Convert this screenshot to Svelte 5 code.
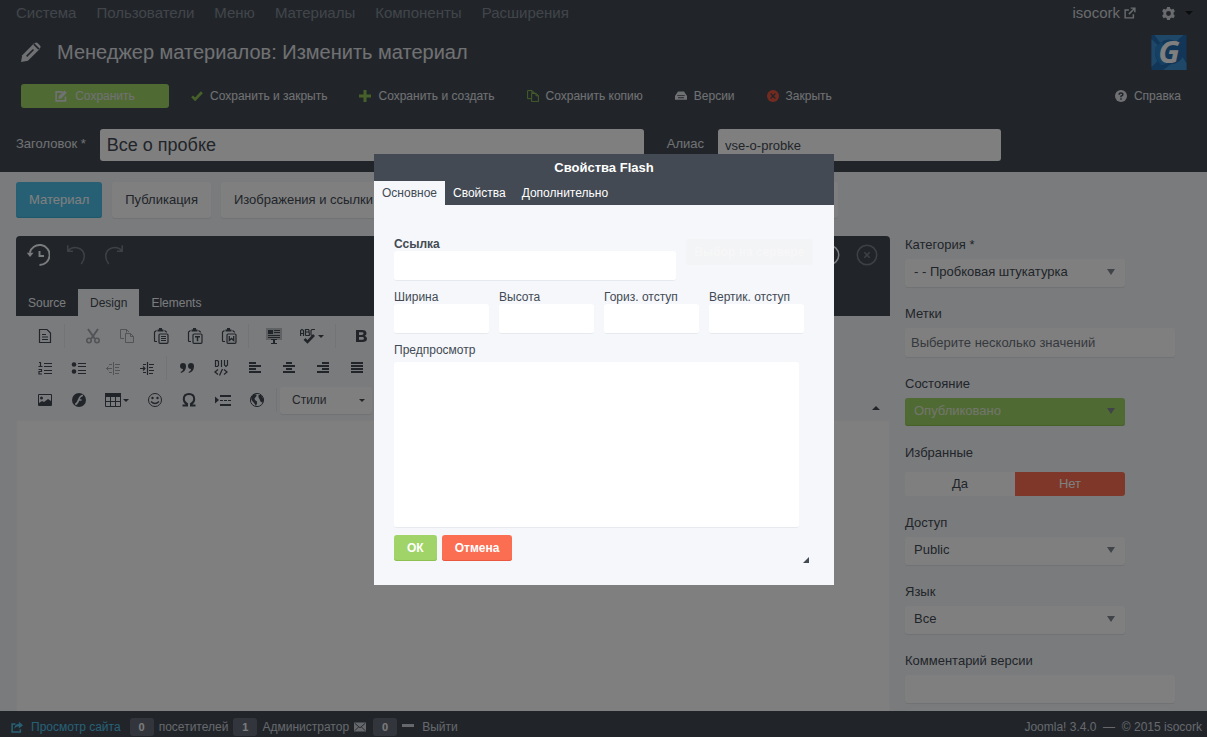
<script>
  const menu = ['Система', 'Пользователи', 'Меню', 'Материалы', 'Компоненты', 'Расширения'];

  const actions = [
    { icon: 'check', text: 'Сохранить и закрыть', tone: 'green' },
    { icon: 'plus', text: 'Сохранить и создать', tone: 'green' },
    { icon: 'copies', text: 'Сохранить копию', tone: 'green' },
    { icon: 'drive', text: 'Версии', tone: 'plain' },
    { icon: 'cancel', text: 'Закрыть', tone: 'red' }
  ];

  const rows = [
    ['page', '|wide', '-cut', '-copy', 'paste', 'pasteText', 'pasteWord', '|mid', 'selectAll', 'spell+', '|mid', 'bold'],
    ['numbers', 'bullets', '-outdent', 'indent', '|', 'quote', 'div', 'left', 'center', 'right', 'justify'],
    ['image', 'flash', 'table+', 'smile', 'omega', 'break', 'globe', '|']
  ];

  const titles = {
    page: 'Новая страница', cut: 'Вырезать', copy: 'Копировать', paste: 'Вставить', pasteText: 'Вставить текст',
    pasteWord: 'Вставить из Word', selectAll: 'Выделить всё', spell: 'Орфография', bold: 'Полужирный',
    numbers: 'Нумерованный список', bullets: 'Маркированный список', outdent: 'Уменьшить отступ',
    indent: 'Увеличить отступ', quote: 'Цитата', div: 'Контейнер', left: 'По левому краю', center: 'По центру',
    right: 'По правому краю', justify: 'По ширине', image: 'Изображение', flash: 'Flash', table: 'Таблица',
    smile: 'Смайлы', omega: 'Символ', break: 'Разрыв страницы', globe: 'IFrame'
  };

  const sizes = ['Ширина', 'Высота', 'Гориз. отступ', 'Вертик. отступ'];

  const s = 'fill="none" stroke="currentColor"';
  const board = `<path ${s} stroke-width="1.200" d="M4 13.500H2.500Q1.500 13.500 1.500 12.500V4L3.500 2.500M11.500 2.500l2 1.500v.500"/><path ${s} stroke-width="2" d="M4.500 2.500h6M6 1h3"/><rect ${s} stroke-width="1.200" x="6" y="6" width="9" height="9.300" rx="1"/>`;

  const icons = {
    pencil: `<path d="M0 16l1-5.500L10.500 1l4.500 4.500L5.500 15z"/><path d="M11.200.8a1.500 1.500 0 0 1 2 0l2 2a1.500 1.500 0 0 1 0 2l-.5.500L10.700 1.300z"/><path fill="none" stroke="#434a54" stroke-width="1.300" d="M4.500 11.500L10 6M10.300 1.700l4 4"/>`,
    edit: `<path ${s} stroke-width="2.200" d="M14 8.500v6H1.500v-12H10"/><path d="M4.500 12l.6-4L12.500.5 15.700 3.700 8.500 11.300z"/>`,
    check: `<path ${s} stroke-width="3.600" d="M1.500 8.500l4 4L14.500 3"/>`,
    plus: `<path d="M6 0h4v6h6v4h-6v6H6v-6H0V6h6z"/>`,
    copies: `<path ${s} stroke-width="1.300" d="M6 11.500H.8V.8h6l2.700 2.700v1.300M6.500.8v3h3"/><path ${s} stroke-width="1.300" d="M6.200 4.500h6l3 3v8h-9zM12 4.500v3.200h3.200"/>`,
    drive: `<path fill-rule="evenodd" d="M4 2h8l4 6v5H0V8zM3 7.500h10v-1H3zM4 9.500V11h8V9.500z"/>`,
    cancel: `<circle cx="8" cy="8" r="8"/><path fill="none" stroke="#434a54" stroke-width="1.800" d="M4.800 4.800l6.400 6.400M11.200 4.800l-6.400 6.400"/>`,
    help: `<circle cx="8" cy="8" r="8"/><path fill="none" stroke="#434a54" stroke-width="2" d="M5.500 6.200Q5.500 4 8 4t2.500 2Q10.500 7.500 8 8.200v1.500M8 11v2"/>`,
    external: `<path ${s} stroke-width="1.900" d="M6.500 4H1.500v10.500h11V9.500M9 1.500h5.500V7M14 2L6.500 9.500"/>`,
    gear: `<path fill-rule="evenodd" d="M6.300 0h3.400l.6 2.300 1.500.8 2.300-.8 1.700 3L14.200 7v2l1.600 1.700-1.700 3-2.300-.8-1.500.8-.6 2.300H6.300l-.6-2.300-1.500-.8-2.300.8-1.700-3L1.800 9V7L.2 5.300l1.700-3 2.300.8 1.500-.8zM8 5a3 3 0 1 0 0 6 3 3 0 0 0 0-6z"/>`,
    share: `<path ${s} stroke-width="2" d="M6 4H1.500v10.500h11V11"/><path d="M4.500 10.500C4.500 6 7 4 10.500 4V1L16 5.500 10.500 10V7C8 7 6 8 4.500 10.500z"/>`,
    mail: `<path d="M0 2h16v12H0z"/><path fill="none" stroke="#434a54" stroke-width="1.200" d="M1 3l7 6 7-6M1 13l5-5M15 13l-5-5"/>`,
    dash: `<path d="M0 4h16v4H0z"/>`,
    page: `<path ${s} stroke-width="1.200" d="M2.500 1.500h7.500l3.500 3.500v9.500h-11z"/><path ${s} stroke-width="1.200" d="M5 6.500h4M5 9h6M5 11.500h6"/>`,
    cut: `<path ${s} stroke-width="2" d="M3 1l7 10M13 1L6 11"/><circle ${s} stroke-width="1.600" cx="4" cy="12.500" r="2.200"/><circle ${s} stroke-width="1.600" cx="12" cy="12.500" r="2.200"/>`,
    copy: `<path ${s} d="M5 10.500H1.500v-9h6L10 4M6.500 5.500h5l3 3v6h-8zM11.500 5.500v3h3M7.500 1.500v3"/>`,
    paste: board + `<path ${s} d="M8 8.500h5M8 10.500h5M8 12.500h5"/>`,
    pasteText: board + `<path ${s} stroke-width="1.500" d="M8 8.700h5M10.500 8.500v4.800"/>`,
    pasteWord: board + `<path ${s} stroke-width="1.300" d="M8.300 8v4.500l2.200-2 2.200 2V8"/>`,
    selectAll: `<path opacity=".3" d="M0 0h16v12H0z"/><path d="M2 2h5v4H2zM8 2h6v1H8zM8 4h6v1H8zM2 7h12v1H2zM2 9h12v1H2zM7 11h2v4H7zM5 11h2v1H5zM9 11h2v1H9zM5 15h6v1H5z"/>`,
    spell: `<path ${s} stroke-width="1.200" d="M.600 8V2.500L2 1.500l1.500 1V8M.600 5.500h3M5.500 7.500v-6H8.500l.5 1v1.500H6H8.500l.8 1v2.500H5.500M15 1.500h-3l-1 1v4.500l1 .5"/><path ${s} stroke-width="2.600" d="M4.500 11l3 3 6.500-7"/>`,
    bold: `<path fill-rule="evenodd" d="M3 2h6c3 0 4.500 1.200 4.500 3.300 0 1.300-.8 2.200-2 2.600 1.500.3 2.500 1.300 2.500 2.800C14 13 12.300 14 9.500 14H3zM6 4.300v2.600h2.500c1.300 0 2-.4 2-1.300s-.7-1.300-2-1.300zM6 9v2.800h2.800c1.400 0 2.100-.5 2.100-1.400S10.200 9 8.800 9z"/>`,
    numbers: `<path ${s} stroke-width="1.200" d="M3.500 7V2.500H2M1.500 6.500h4M1.500 9.500h3v2h-2.500v2.500H5M7 3.500h8M7 6.500h8M7 10.500h8M7 13.500h8"/>`,
    bullets: `<circle cx="3" cy="4.500" r="2.300"/><circle cx="3" cy="11.500" r="2.300"/><path ${s} stroke-width="1.200" d="M7 3.500h8M7 6.500h8M7 10.500h8M7 13.500h8"/>`,
    outdent: `<path ${s} d="M8.500 2v13M10 4.500h5M10 7.500h4M10 10.500h5M10 13.500h4M1 8.500h6M3.500 6.500l-2 2 2 2M4 4.500h3M4 12.500h3"/>`,
    indent: `<path ${s} stroke-width="1.200" d="M8.500 2v13M10 4.500h5M10 7.500h4M10 10.500h5M10 13.500h4M1 8.500h5M4 6.500l2 2-2 2M4 4.500h3M4 12.500h3"/>`,
    quote: `<path d="M4 3a3 3 0 0 1 3 3c0 4-2 6-5 7l-.5-1C3 11.200 4 10.300 4 9a3 3 0 0 1 0-6zM12 3a3 3 0 0 1 3 3c0 4-2 6-5 7l-.5-1c1.500-.8 2.500-1.700 2.500-3a3 3 0 0 1 0-6z"/>`,
    div: `<path ${s} stroke-width="1.200" d="M2.500.500h2l1 1v4l-1 1h-2zM8.500 0v7M11.500 0v5l1.500 1.500L14.500 5V0"/><path ${s} stroke-width="1.300" d="M5 9.500l-3 2.500 3 2.500M11 9.500l3 2.500-3 2.500M9.500 9l-3 6.500"/>`,
    left: `<path d="M2 2h7v2H2zM2 5h12v2H2zM2 8h7v2H2zM2 11h12v2H2z"/>`,
    center: `<path d="M5 2h6v2H5zM2 5h12v2H2zM5 8h6v2H5zM2 11h12v2H2z"/>`,
    right: `<path d="M7 2h7v2H7zM2 5h12v2H2zM7 8h7v2H7zM2 11h12v2H2z"/>`,
    justify: `<path d="M2 2h12v2H2zM2 5h12v2H2zM2 8h12v2H2zM2 11h12v2H2z"/>`,
    image: `<path ${s} d="M1.500 2.500h13v11h-13z"/><circle cx="4.500" cy="6" r="1.500"/><path d="M2 13v-2l3-2 2 1 4-3 3 2v4z"/>`,
    flash: `<circle cx="8" cy="8" r="7"/><path fill="none" stroke="#f5f7fa" stroke-width="1.700" d="M12 3.500c-2.500 0-3.500 2-4.300 4.300C7 10 6 12 4.200 12.500M7.500 8h3"/>`,
    table: `<path d="M0 1h16v4H0z"/><path ${s} d="M.5 2v12.500h15V2M0 9.500h16M5.500 4v10M10.500 4v10"/>`,
    smile: `<circle ${s} cx="8" cy="8" r="6.500"/><circle cx="5.500" cy="6" r="1.200"/><circle cx="10.500" cy="6" r="1.200"/><path ${s} stroke-width="1.300" d="M4 9.500q4 4 8 0"/>`,
    omega: `<path ${s} stroke-width="2" d="M1.500 13.500H6V12C3.700 11 2.800 9 2.800 7c0-3 2-5 5.200-5s5.200 2 5.200 5c0 2-.9 4-3.200 5v1.500h4.500"/>`,
    break: `<path d="M0 4.500L4 8l-4 3.500zM5 3h11v2H5zM5 12h11v2H5zM5 8h3v1H5zM9 8h3v1H9zM13 8h3v1h-3z"/>`,
    globe: `<circle ${s} cx="8" cy="8" r="6.600"/><path d="M2 5l3-3 2.500.500v1.500L5.500 6.500 6 8l2 1.500V11.500l-1 2.500L5 11 2.500 8zM9.500 3l2.500 0L14.500 7l-1 4-2-1.500-1-2.500L9.500 5.500z"/>`,
    history: `<path ${s} stroke-width="1.300" d="M2.500 6.500A6.700 6.700 0 1 1 9 14.700M9 5.300v3.400h3"/><path d="M.500 6.500H5L2.700 9.300z"/>`,
    undo: `<path ${s} stroke-width="1" d="M2.500 1.500v4H6M2.500 5.300C6 1.500 13.500 2.500 13.500 9c0 2-.8 3.500-2 5"/>`,
    redo: `<path ${s} stroke-width="1" d="M13.500 1.500v4H10M13.500 5.300C10 1.500 2.500 2.500 2.500 9c0 2 .8 3.500 2 5"/>`,
    round: `<circle ${s} cx="8" cy="8" r="6.500"/><path ${s} d="M5 8h4"/>`,
    close: `<circle ${s} cx="8" cy="8" r="6.500"/><path ${s} d="M6.200 6.200l3.600 3.600M9.800 6.200L6.200 9.800"/>`
  };
</script>

{#snippet icon(name, size = 16)}
  <svg viewBox="0 0 16 16" width={size} height={size} fill="currentColor" aria-hidden="true">{@html icons[name]}</svg>
{/snippet}

{#snippet picker(id, label, value, tone = '')}
  <div class="group">
    <label for={id}>{label}</label>
    <div class="select {tone}">
      <select {id}><option>{value}</option></select>
    </div>
  </div>
{/snippet}

<div class="page">
  <header>
    <nav class="menu">
      {#each menu as item}<a href="#menu">{item}</a>{/each}
      <div class="account">
        <a class="site" href="#site">isocork {@render icon('external', 12)}</a>
        <button class="settings" aria-label="Настройки">{@render icon('gear', 13)}<span class="caret"></span></button>
      </div>
    </nav>

    <div class="heading">
      {@render icon('pencil', 20)}
      <h1>Менеджер материалов: Изменить материал</h1>
      <svg class="logo" viewBox="0 0 36 36" width="36" height="35" aria-label="Логотип">
        <path fill="#236db0" d="M0 0h36v36H0z" />
        <path fill="#3f8fd0" d="M3 0h30l-8 7Q17 2 9 8zM0 4l6 6Q1 18 6 27L0 33zM12 36l8-6q8 0 12-7l4 6v7z" />
        <path fill="#2c80c6" d="M4 12l7-5 6 22-7 2Q2 22 4 12z" />
        <text x="18" y="29" text-anchor="middle">G</text>
      </svg>
    </div>

    <div class="actions">
      <button class="save">{@render icon('edit', 12)}Сохранить</button>
      {#each actions as a}
        <button><span class={a.tone}>{@render icon(a.icon, 12)}</span>{a.text}</button>
      {/each}
      <button class="help">{@render icon('help', 12)}Справка</button>
    </div>

    <div class="naming">
      <label for="title">Заголовок *</label>
      <input id="title" class="title" value="Все о пробке" />
      <label for="alias">Алиас</label>
      <input id="alias" class="alias" value="vse-o-probke" />
    </div>
  </header>

  <main>
    <nav class="tabs">
      <button class="active">Материал</button>
      <button>Публикация</button>
      <button>Изображения и ссылки</button>
      <button class="rest" aria-label="Параметры"></button>
    </nav>

    <div class="columns">
      <section class="editor">
        <div class="bar">
          <div class="tools">
            <button aria-label="История">{@render icon('history', 24)}</button>
            <button class="off" aria-label="Отменить">{@render icon('undo', 24)}</button>
            <button class="off" aria-label="Повторить">{@render icon('redo', 24)}</button>
            <span class="space"></span>
            <button aria-label="Свернуть">{@render icon('round', 24)}</button>
            <button class="off" aria-label="Закрыть">{@render icon('close', 24)}</button>
          </div>
          <div class="modes">
            <button>Source</button>
            <button class="active">Design</button>
            <button>Elements</button>
          </div>
        </div>

        <div class="toolbox">
          {#each rows as row, i}
            <div class="row">
              {#each row as entry}
                {#if entry[0] === '|'}
                  <span class="sep" class:wide={entry === '|wide'} class:mid={entry === '|mid'}></span>
                {:else}
                  {@const name = entry.replace(/[-+]/, '')}
                  <button class:off={entry[0] === '-'} aria-label={titles[name]}>
                    {@render icon(name)}{#if entry.endsWith('+')}<span class="caret"></span>{/if}
                  </button>
                {/if}
              {/each}
              {#if i === 2}
                <button class="styles">Стили<span class="caret"></span></button>
                <button class="collapse" aria-label="Свернуть панель"><span class="caret up"></span></button>
              {/if}
            </div>
          {/each}
        </div>
        <div class="canvas"></div>
      </section>

      <aside>
        {@render picker('category', 'Категория *', '- - Пробковая штукатурка')}
        <div class="group">
          <label for="tags">Метки</label>
          <input id="tags" class="tall" placeholder="Выберите несколько значений" />
        </div>
        {@render picker('state', 'Состояние', 'Опубликовано', 'published')}
        <div class="group" role="group" aria-labelledby="featured">
          <span id="featured" class="name">Избранные</span>
          <div class="switch"><button>Да</button><button class="no">Нет</button></div>
        </div>
        {@render picker('access', 'Доступ', 'Public')}
        {@render picker('language', 'Язык', 'Все')}
        <div class="group">
          <label for="note">Комментарий версии</label>
          <input id="note" />
        </div>
      </aside>
    </div>
  </main>

  <footer>
    <a class="view" href="#view">{@render icon('share', 12)}Просмотр сайта</a>
    <b>0</b><span>посетителей</span>
    <b>1</b><span>Администратор</span>
    {@render icon('mail', 12)}
    <b class="count">0</b>
    {@render icon('dash', 12)}
    <a class="logout" href="#logout">Выйти</a>
    <p>Joomla! 3.4.0 &nbsp;—&nbsp; © 2015 isocork</p>
  </footer>
</div>

<div class="overlay">
  <div class="dialog" role="dialog" aria-modal="true" aria-labelledby="dialog-title">
    <div class="dialog-head">
      <h2 id="dialog-title">Свойства Flash</h2>
      <div class="dialog-tabs">
        <button class="active">Основное</button>
        <button>Свойства</button>
        <button>Дополнительно</button>
      </div>
    </div>
    <form class="dialog-body">
      <div class="source">
        <div class="field">
          <label class="strong" for="url">Ссылка</label>
          <input id="url" />
        </div>
        <button type="button" class="browse">Выбор на сервере</button>
      </div>
      <div class="sizes">
        {#each sizes as size, i}
          <div class="field">
            <label for="size-{i}">{size}</label>
            <input id="size-{i}" />
          </div>
        {/each}
      </div>
      <div class="field preview">
        <span>Предпросмотр</span>
        <div class="frame"></div>
      </div>
      <div class="buttons">
        <button type="button" class="ok">ОК</button>
        <button type="button" class="dismiss">Отмена</button>
        <span class="grip"></span>
      </div>
    </form>
  </div>
</div>

<style>
  :global(body) {
    background: #f5f7fa;
  }

  .page,
  .overlay {
    font: 13px/20px 'Liberation Sans', Arial, sans-serif;
    color: #434a54;
  }

  .page *,
  .overlay * {
    box-sizing: border-box;
  }

  .page {
    display: flex;
    flex-direction: column;
    min-height: 100vh;
  }

  button,
  input,
  select {
    font: inherit;
    color: inherit;
    border: 0;
    margin: 0;
    padding: 0;
    background: none;
  }

  a {
    color: inherit;
    text-decoration: none;
  }

  svg {
    display: block;
    flex: none;
  }

  .caret {
    border: 4px solid transparent;
    border-top-color: currentColor;
    border-bottom: 0;
  }

  .row .caret {
    border-width: 3px;
    border-bottom: 0;
  }

  .row .up {
    border: 4px solid transparent;
    border-bottom-color: currentColor;
    border-top: 0;
  }

  /* Header */
  header {
    background: #434a54;
    color: #e0e2e6;
    padding-bottom: 11px;
  }

  .menu {
    display: flex;
    align-items: center;
    gap: 20px;
    height: 26px;
    padding: 0 14px 0 16px;
    font-size: 15px;
    color: #838a94;
  }

  .account {
    display: flex;
    gap: 26px;
    margin-left: auto;
    color: #d3d6db;
  }

  .site,
  .settings {
    display: flex;
    align-items: center;
    gap: 4px;
  }

  .settings {
    gap: 10px;
  }

  .settings .caret {
    color: #16181c;
  }

  .heading {
    display: flex;
    align-items: center;
    gap: 16px;
    height: 52px;
    padding: 0 20px 0 21px;
  }

  h1 {
    flex: 1;
    margin: 0;
    font-size: 20px;
    font-weight: normal;
  }

  .logo {
    overflow: visible;
  }

  .logo text {
    font: italic bold 32px/1 'Open Sans', sans-serif;
    fill: #fff;
  }

  .actions {
    display: flex;
    gap: 12px;
    margin-top: 6px;
    padding: 0 16px 0 21px;
    font-size: 12px;
  }

  .actions button {
    display: flex;
    align-items: center;
    gap: 7px;
    height: 24px;
    padding: 0 10px;
  }

  .actions .save {
    justify-content: center;
    gap: 8px;
    width: 148px;
    border-radius: 3px;
    background: #a0d468;
  }

  .actions .help {
    margin-left: auto;
  }

  .green {
    color: #8cc152;
  }

  .red {
    color: #e9573f;
  }

  .naming {
    display: flex;
    align-items: center;
    gap: 14px;
    margin-top: 21px;
    padding: 0 16px;
  }

  .naming label {
    padding-bottom: 2px;
  }

  .naming input {
    min-width: 0;
    height: 32px;
    padding: 0 7px;
    border-radius: 3px;
    background: #fff;
    color: #434a54;
  }

  .naming .title {
    flex: 0 1 544px;
    margin-right: 9px;
    font-size: 18px;
  }

  .naming .alias {
    flex: 0 1 283px;
  }

  /* Body */
  main {
    flex: 1;
    display: flex;
    flex-direction: column;
    padding: 10px 16px 0;
  }

  .tabs {
    display: flex;
    gap: 10px;
    margin-right: 353px;
  }

  .tabs button {
    height: 36px;
    padding: 0 13px;
    border-radius: 3px;
    background: #fff;
    box-shadow: 0 1px 1px #dfe2e6;
    white-space: nowrap;
  }

  .tabs .active {
    background: #4fc1e9;
    color: #fff;
    box-shadow: inset 0 -1px 1px #3bafda;
  }

  .tabs .rest {
    flex: 1;
  }

  .columns {
    flex: 1;
    display: grid;
    grid-template-columns: minmax(0, 1fr) 286px;
    gap: 15px;
    margin-top: 18px;
  }

  .editor {
    display: flex;
    flex-direction: column;
  }

  .bar {
    display: flex;
    flex-direction: column;
    justify-content: space-between;
    height: 80px;
    border-radius: 4px 4px 0 0;
    background: #434a54;
    color: #f5f7fa;
  }

  .tools {
    display: flex;
    gap: 14px;
    padding: 7px 11px 0 10px;
  }

  .tools .off {
    color: #7b828c;
  }

  .space {
    flex: 1;
  }

  .modes {
    display: flex;
    font-size: 12px;
  }

  .modes button {
    height: 27px;
    padding: 0 12px;
  }

  .modes .active {
    background: #f5f7fa;
    color: #434a54;
  }

  .toolbox {
    padding: 4px 10px 4px 12px;
  }

  .row {
    display: flex;
    align-items: center;
    height: 32px;
  }

  .row button {
    display: flex;
    align-items: center;
    gap: 2px;
    height: 32px;
    padding: 0 9px;
  }

  .row .off {
    color: #a3a7ad;
  }

  .sep {
    width: 1px;
    height: 24px;
    margin: 0 3px 0 2px;
    background: #e6e9ed;
  }

  .sep.mid {
    margin-right: 8px;
  }

  .sep.wide {
    margin-right: 11px;
  }

  .row .styles {
    justify-content: space-between;
    width: 92px;
    height: 27px;
    padding: 0 7px 0 12px;
    border-radius: 3px;
    background: #fff;
    box-shadow: 0 1px 1px #dfe2e6;
    font-size: 12px;
  }

  .row .collapse {
    align-self: flex-end;
    height: 16px;
    margin-left: auto;
    padding: 0;
  }

  .canvas {
    flex: 1;
    background: #fff;
    border: 1px solid #f8f9fb;
    border-bottom: 0;
  }

  /* Sidebar */
  aside {
    padding-bottom: 8px;
  }

  .group {
    margin: -1px 0 18px;
  }

  .group:last-child {
    margin-bottom: 0;
  }

  .group label,
  .group .name {
    display: block;
    margin-bottom: 4px;
  }

  .group input {
    display: block;
    width: 270px;
    max-width: 100%;
    height: 28px;
    padding: 0 6px;
    border-radius: 3px;
    background: #fff;
    box-shadow: 0 1px 1px #dfe2e6;
  }

  .group .tall {
    height: 29px;
  }

  .group input::placeholder {
    color: #6b727b;
    opacity: 1;
  }

  .select {
    display: grid;
    width: 220px;
    height: 28px;
    align-content: start;
    align-items: center;
    border-radius: 3px;
    background: #fff;
    box-shadow: 0 1px 1px #dfe2e6;
  }

  .select select,
  .select::after {
    grid-area: 1 / 1;
  }

  .select select {
    appearance: none;
    width: 100%;
    height: 26px;
    padding: 0 9px;
  }

  .select::after {
    content: '';
    justify-self: end;
    margin-right: 10px;
    border: 4px solid transparent;
    border-top: 6px solid #80868e;
    border-bottom: 0;
    pointer-events: none;
  }

  .published {
    background: #a0d468;
    color: #e4ecd9;
    box-shadow: inset 0 -1px 1px #8cc152;
  }

  .switch {
    display: grid;
    grid-template-columns: 1fr 1fr;
    width: 220px;
    padding-top: 5px;
  }

  .switch button {
    height: 24px;
    border-radius: 3px 0 0 3px;
    background: #fff;
  }

  .switch .no {
    border-radius: 0 3px 3px 0;
    background: #fc6e51;
    color: #fff;
  }

  /* Status bar */
  footer {
    display: flex;
    align-items: center;
    gap: 5px;
    height: 26px;
    padding: 5px 5px 0 11px;
    background: #434a54;
    color: #ccd1d9;
    font-size: 12px;
  }

  footer b {
    padding: 0 9px;
    border-radius: 3px;
    background: #656d78;
    color: #f5f7fa;
    font-size: 11px;
    line-height: 18px;
  }

  footer .count {
    margin-left: 2px;
  }

  .logout {
    margin-left: 3px;
  }

  .view {
    display: flex;
    align-items: center;
    gap: 8px;
    margin-right: 4px;
    color: #4fc1e9;
  }

  footer p {
    margin: 0 0 0 auto;
  }

  /* Dialog */
  .overlay {
    position: fixed;
    inset: 0;
    display: grid;
    place-content: center;
    padding: 2px 0 0 1px;
    box-sizing: border-box;
    background: rgba(0, 0, 0, 0.5);
    font-size: 12px;
    line-height: 14px;
  }

  .dialog {
    width: 460px;
    max-width: 100%;
    background: #f5f7fa;
  }

  .dialog-head {
    background: #434a54;
    color: #fff;
  }

  h2 {
    margin: 0;
    font-size: 13px;
    line-height: 27px;
    text-align: center;
  }

  .dialog-tabs {
    display: flex;
  }

  .dialog-tabs button {
    height: 24px;
    padding: 0 8px;
  }

  .dialog-tabs .active {
    background: #f5f7fa;
    color: #434a54;
  }

  .dialog-body {
    display: grid;
    gap: 9px;
    padding: 32px 20px 24px;
  }

  .source {
    display: grid;
    grid-template-columns: 282px 127px;
    gap: 10px;
  }

  .sizes {
    display: grid;
    grid-template-columns: repeat(4, 95px);
    gap: 10px;
  }

  .field {
    display: grid;
  }

  .field input,
  .frame {
    width: 100%;
    height: 30px;
    padding: 0 6px;
    border-bottom: 1px solid #e6e9ed;
    border-radius: 3px;
    background: #fff;
  }

  .strong {
    font-weight: bold;
  }

  .browse {
    height: 26px;
    margin-top: 2px;
    border-radius: 3px;
    background: #f3f4f5;
    color: #f7f7f8;
    font-weight: bold;
  }

  .preview {
    gap: 5px;
    width: 405px;
  }

  .frame {
    height: 166px;
  }

  .buttons {
    display: flex;
    gap: 5px;
    margin-top: -2px;
  }

  .buttons button {
    height: 26px;
    padding: 0 13px;
    border-radius: 3px;
    color: #fff;
    font-weight: bold;
  }

  .buttons .ok {
    background: #a0d468;
    box-shadow: inset 0 -1px #8cc152;
  }

  .buttons .dismiss {
    background: #fc6e51;
    box-shadow: inset 0 -1px #e9573f;
  }

  .grip {
    align-self: flex-end;
    margin: 0 5px -2px auto;
    border: 3px solid #434a54;
    border-top-color: transparent;
    border-left-color: transparent;
  }
</style>
